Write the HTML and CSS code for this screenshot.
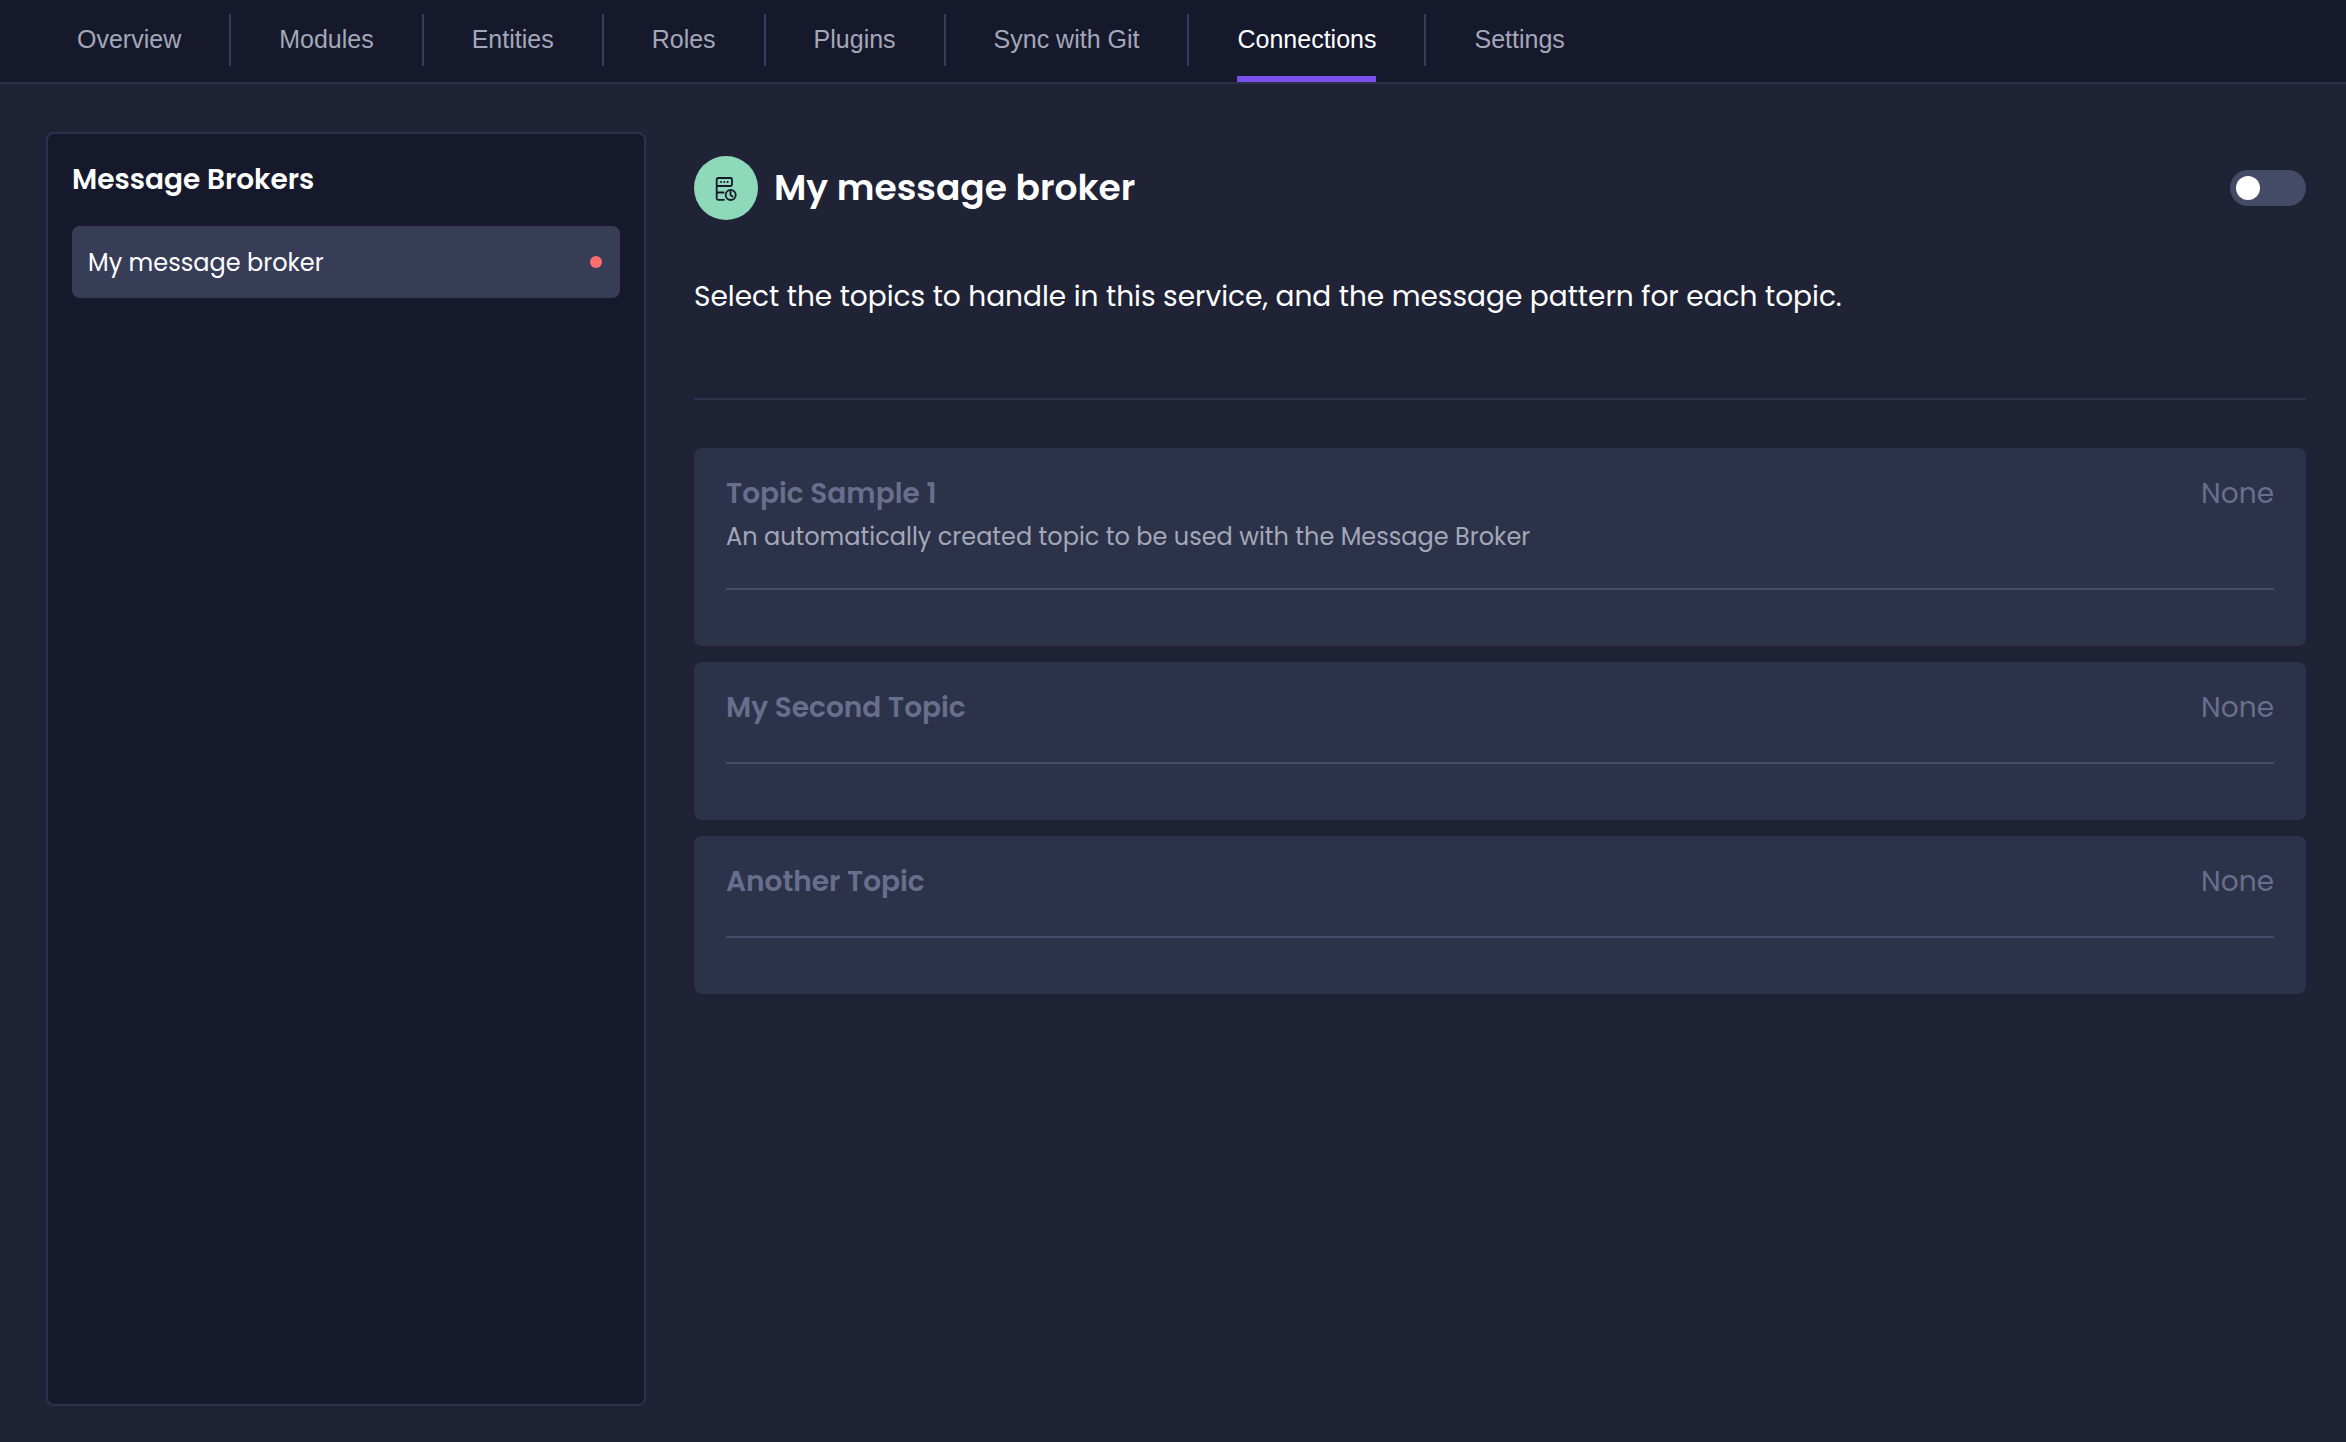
FILE: index.html
```html
<!DOCTYPE html>
<html lang="en">
<head>
  <meta charset="utf-8">
  <meta name="viewport" content="width=device-width, initial-scale=1">
  <title>Connections</title>
  <link rel="stylesheet" href="styles.css">
</head>
<body>
  <nav class="tabs" aria-label="Service">
    <a class="tab" href="#overview"><span class="tab-label">Overview</span></a>
    <a class="tab" href="#modules"><span class="tab-label">Modules</span></a>
    <a class="tab" href="#entities"><span class="tab-label">Entities</span></a>
    <a class="tab" href="#roles"><span class="tab-label">Roles</span></a>
    <a class="tab" href="#plugins"><span class="tab-label">Plugins</span></a>
    <a class="tab" href="#git"><span class="tab-label">Sync with Git</span></a>
    <a class="tab tab-active" href="#connections" aria-current="page"><span class="tab-label">Connections</span></a>
    <a class="tab" href="#settings"><span class="tab-label">Settings</span></a>
  </nav>
  <div class="layout">
    <aside class="sidebar">
      <h2 class="sidebar-title">Message Brokers</h2>
      <a class="broker-link" href="#broker">
        <span>My message broker</span>
        <span class="status-dot"></span>
      </a>
    </aside>
    <main class="content">
      <header class="broker-header">
        <span class="broker-icon">
          <svg width="24" height="26" viewBox="0 0 24 26" fill="none" stroke="currentColor" stroke-width="1.800" stroke-linecap="round" stroke-linejoin="round" aria-hidden="true">
            <path d="M10 24.800H4.200a1.500 1.500 0 0 1-1.500-1.500V4.500A1.500 1.500 0 0 1 4.200 3h12.300a1.500 1.500 0 0 1 1.500 1.500v5a1.500 1.500 0 0 1-1.500 1.500H2.700M2.700 17.500h7"/>
            <path stroke-width="2" d="M7 7h.01M10.300 7h.01M13.600 7h.01"/>
            <circle cx="16.700" cy="20" r="5"/>
            <path d="M16.500 17v3l2 1.500"/>
          </svg>
        </span>
        <h1 class="broker-title">My message broker</h1>
        <input class="toggle" type="checkbox" role="switch" aria-label="Enable My message broker">
      </header>
      <p class="intro">Select the topics to handle in this service, and the message pattern for each topic.</p>
      <section class="topics">
        <article class="topic">
          <div class="topic-head">
            <h3 class="topic-name">Topic Sample 1</h3>
            <span class="topic-pattern">None</span>
          </div>
          <p class="topic-description">An automatically created topic to be used with the Message Broker</p>
        </article>
        <article class="topic">
          <div class="topic-head">
            <h3 class="topic-name">My Second Topic</h3>
            <span class="topic-pattern">None</span>
          </div>
        </article>
        <article class="topic">
          <div class="topic-head">
            <h3 class="topic-name">Another Topic</h3>
            <span class="topic-pattern">None</span>
          </div>
        </article>
      </section>
    </main>
  </div>
</body>
</html>
```
FILE: styles.css
```css
:root {
  --page: #202336;
  --panel: #16192b;
  --line: #2c3249;
  --selected: #373d57;
  --rule: #444b66;
  --muted: #686f8c;
  --soft: #a3a8b8;
}

*,
*::before,
*::after {
  box-sizing: border-box;
}

body {
  display: flex;
  flex-direction: column;
  min-height: 100vh;
  margin: 0;
  background: var(--page);
  color: #fff;
  font-family: Poppins, Inter, sans-serif;
}

h1, h2, h3, p {
  margin: 0;
}

a {
  color: inherit;
  text-decoration: none;
}

/* Top tabs */
.tabs {
  display: flex;
  height: 84px;
  padding-left: 29px;
  background: var(--panel);
  border-bottom: 2px solid var(--line);
  color: var(--soft);
  font-family: "Liberation Sans", Arial, sans-serif;
  font-size: 25px;
}

.tab {
  display: flex;
  padding: 0 50px 0 48px;
  background: linear-gradient(var(--selected), var(--selected)) right 14px / 2px 52px no-repeat;
}

.tab:last-child {
  background: none;
}

.tab-label {
  height: 82px;
  border-bottom: 6px solid transparent;
  line-height: 79px;
}

.tab-active {
  color: #fff;
}

.tab-active .tab-label {
  border-color: #7950ed;
}

/* Page body */
.layout {
  display: flex;
  flex: 1;
  gap: 48px;
  padding: 48px 40px 36px 46px;
}

.sidebar {
  flex: 0 0 600px;
  padding: 24px;
  background: var(--panel);
  border: 2px solid var(--line);
  border-radius: 8px;
}

.sidebar-title {
  margin-bottom: 24px;
  font-size: 28px;
  font-weight: 600;
  line-height: 44px;
}

.broker-link {
  display: flex;
  align-items: center;
  justify-content: space-between;
  height: 72px;
  padding: 0 18px 0 16px;
  background: var(--selected);
  border-radius: 8px;
  font-size: 24px;
}

.status-dot {
  width: 12px;
  height: 12px;
  border-radius: 50%;
  background: #ff6e6e;
}

.content {
  flex: 1;
  padding-top: 24px;
}

.broker-header {
  display: flex;
  align-items: center;
  gap: 16px;
}

.broker-icon {
  display: grid;
  place-items: center;
  width: 64px;
  height: 64px;
  border-radius: 50%;
  background: #8dd9b9;
  color: var(--panel);
}

.broker-title {
  font-size: 36px;
  font-weight: 600;
  line-height: 48px;
}

.toggle {
  appearance: none;
  width: 76px;
  height: 36px;
  margin: 0 0 0 auto;
  padding: 6px;
  border-radius: 18px;
  background: var(--rule);
}

.toggle::before {
  content: "";
  display: block;
  width: 24px;
  height: 24px;
  border-radius: 50%;
  background: #fff;
}

.toggle:checked::before {
  margin-left: auto;
}

.intro {
  padding: 56px 0 80px;
  border-bottom: 2px solid var(--line);
  font-size: 28px;
  line-height: 42px;
}

/* Topic cards */
.topics {
  display: flex;
  flex-direction: column;
  gap: 16px;
  margin-top: 48px;
}

.topic {
  padding: 25px 32px 0;
  background: var(--line);
  border-radius: 8px;
}

.topic::after {
  content: "";
  display: block;
  height: 58px;
  margin-top: 33px;
  border-top: 2px solid var(--rule);
}

.topic-head {
  display: flex;
  justify-content: space-between;
  color: var(--muted);
  font-size: 28px;
  line-height: 42px;
}

.topic-name {
  font-size: 28px;
  font-weight: 600;
}

.topic-description {
  margin-top: 4px;
  color: var(--soft);
  font-size: 24px;
  line-height: 36px;
}
```
